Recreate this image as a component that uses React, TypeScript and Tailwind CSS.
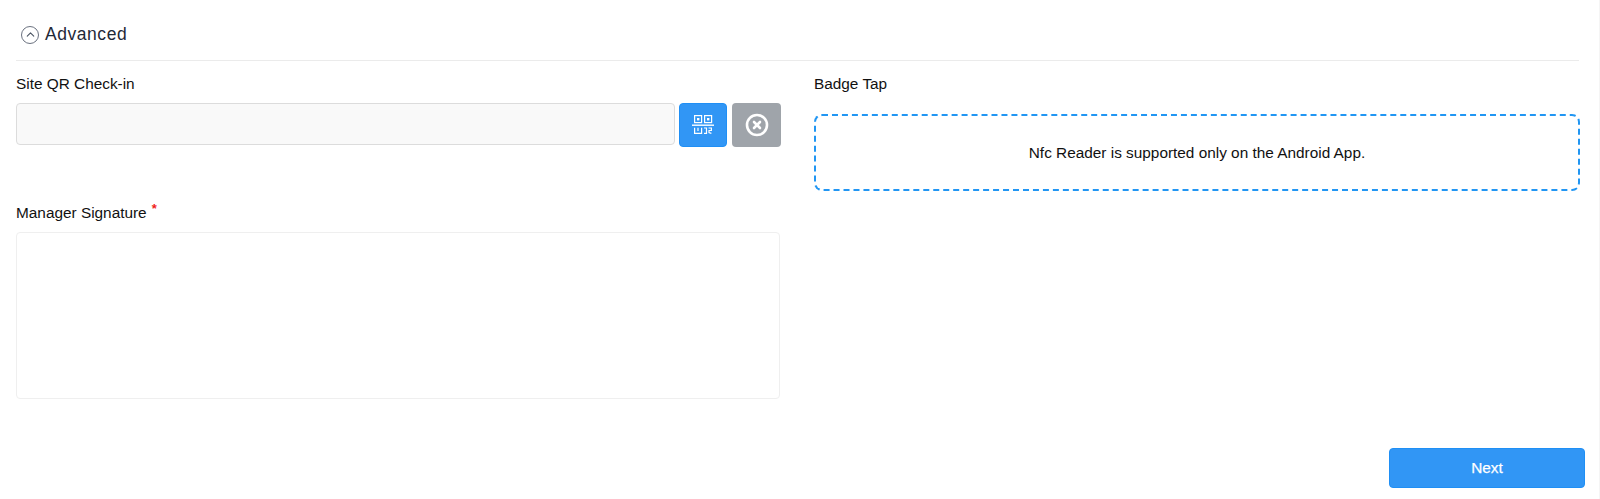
import { ChevronUp, CircleX } from "lucide-react";

function QrIcon() {
  return (
    <svg width="22" height="20" viewBox="0 0 22 20" fill="none" stroke="white" strokeWidth="1.2">
      <rect x="2.6" y="0.6" width="7" height="7" />
      <rect x="12.6" y="0.6" width="7" height="7" />
      <rect x="5" y="3" width="2.4" height="2.4" fill="white" stroke="none" />
      <rect x="15" y="3" width="2.4" height="2.4" fill="white" stroke="none" />
      <path d="M0 10.2H22" strokeWidth="1.4" />
      <path d="M2.6 12.8V18.4H9.6V12.8M6 12.8V16M12 13H14.5V18.4H12M16.5 13H19.4V15.5H17V17.5L19.4 18.4" />
    </svg>
  );
}

export default function App() {
  return (
    <div className="h-[499px] w-[1600px] overflow-hidden border-r border-[#f5f5f5] bg-white pl-[16px] pr-[20px] font-['Liberation_Sans',sans-serif] text-[15.36px] text-[#111]">
      <div className="flex h-[61px] items-center gap-[6px] border-b border-[#ebebeb] pl-[5px] pt-[9px]">
        <span className="flex size-[18px] items-center justify-center rounded-full border-[1.5px] border-[#6b7280]">
          <ChevronUp size={13} strokeWidth={2} className="text-[#4b5563]" />
        </span>
        <span className="text-[17.5px] leading-none tracking-[0.55px] text-[#1f2937]">Advanced</span>
      </div>

      <div className="grid grid-cols-[765px_766px] gap-x-[33px]">
        <div>
          <div className="mt-[13px] h-[20px] leading-[20px]">Site QR Check-in</div>
          <div className="mt-[9px] flex items-start">
            <div className="h-[42px] w-[659px] rounded-[4px] border border-[#dcdcdc] bg-[#f9f9f9]" />
            <button className="ml-[4px] flex h-[44px] w-[48px] items-center justify-center rounded-[4px] border border-[#1f8ff5] bg-[#3196f5]">
              <QrIcon />
            </button>
            <button className="ml-[5px] flex h-[44px] w-[49px] items-center justify-center rounded-[4px] bg-[#9fa4aa]">
              <CircleX size={24} strokeWidth={2.6} className="text-white" />
            </button>
          </div>
          <div className="mt-[56px] flex h-[20px] leading-[20px]">
            Manager Signature
            <span className="ml-[5px] -mt-[4px] text-[13px] font-bold text-[#f01c1c]">*</span>
          </div>
          <div className="mt-[9px] h-[167px] w-[764px] rounded-[4px] border border-[#efefef]" />
        </div>

        <div>
          <div className="mt-[13px] h-[20px] leading-[20px]">Badge Tap</div>
          <div className="mt-[20px] flex h-[77px] items-center justify-center rounded-[8px] border-2 border-dashed border-[#2196f3]">
            Nfc Reader is supported only on the Android App.
          </div>
        </div>
      </div>

      <div className="mt-[49px] flex justify-end">
        <button className="-mr-[6px] h-[40px] w-[196px] rounded-[4px] border border-[#1f8ff5] bg-[#3196f5] font-normal text-white [-webkit-text-stroke:0.25px_white]">
          Next
        </button>
      </div>
    </div>
  );
}
